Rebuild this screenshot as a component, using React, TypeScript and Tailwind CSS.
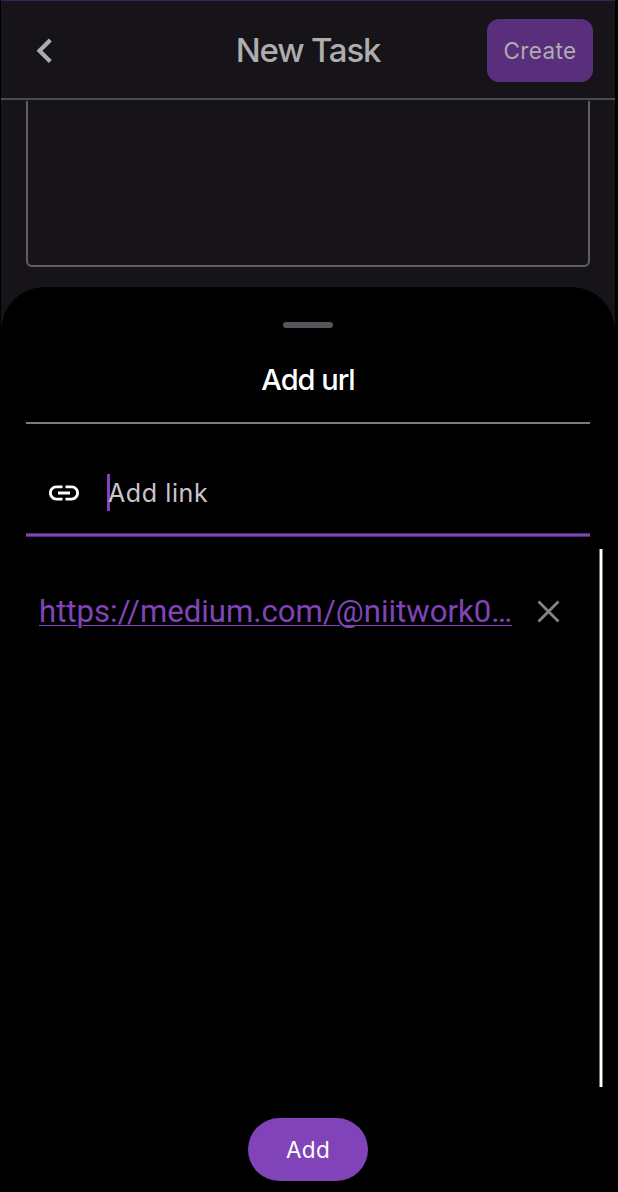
function Header() {
  return (
    <header className="grid h-[100px] shrink-0 grid-cols-[1fr_auto_1fr] items-center border-t border-b-2 border-t-[#3b205b] border-b-[#4b4b4c] px-[22px] pt-[2px]">
      <button aria-label="Back" className="flex w-8 items-center justify-end">
        <svg width="20" height="28" viewBox="0 0 20 28" fill="none" stroke="#adadad" strokeWidth="4.2">
          <path d="M15.3 2.9 4.5 13.7l10.8 10.8" />
        </svg>
      </button>
      <h1 className="font-[Inter,sans-serif] text-[33px] font-medium tracking-[-1.2px] text-[#adadad]">New Task</h1>
      <button className="h-[63px] w-[106px] justify-self-end rounded-xl bg-[#582e7d] font-[Inter,sans-serif] text-[22.5px] tracking-[0.4px] text-[#adadad]">
        Create
      </button>
    </header>
  );
}

function LinkIcon() {
  return (
    <svg width="36" height="36" viewBox="0 0 24 24" fill="#fff">
      <path d="M3.9 12c0-1.71 1.39-3.1 3.1-3.1h4V7H7c-2.76 0-5 2.24-5 5s2.24 5 5 5h4v-1.9H7c-1.71 0-3.1-1.39-3.1-3.1zM8 13h8v-2H8v2zm9-6h-4v1.9h4c1.71 0 3.1 1.39 3.1 3.1s-1.39 3.1-3.1 3.1h-4V17h4c2.76 0 5-2.24 5-5s-2.24-5-5-5z" />
    </svg>
  );
}

function AddUrlSheet() {
  return (
    <section className="flex grow flex-col rounded-t-[44px] bg-black pt-[35px]">
      <div className="h-[6px] w-[50px] shrink-0 self-center rounded-full bg-[#57545b]" />
      <div className="mx-[25px] flex h-[96px] shrink-0 items-center justify-center border-b-2 border-[#7c7c7c] pt-[10px]">
        <h2 className="font-[Inter,sans-serif] text-[29px] font-medium tracking-[-1px] text-white">Add url</h2>
      </div>
      <label className="mx-[25px] flex h-[109px] shrink-0 items-center pl-[19.5px] pt-[28px]">
        <LinkIcon />
        <span className="ml-[25.5px] mb-px h-[37px] w-[3px] bg-[#8144b8]" />
        <span className="-ml-[2px] pt-[2px] font-[Inter,sans-serif] text-[25px] tracking-[0.6px] text-[#cac4d0]">Add link</span>
      </label>
      <div className="mx-[25px] h-1 shrink-0 border-y border-[#4f2a70] bg-[#8144b8]" />
      <div className="mt-3 flex h-[538px] shrink-0 justify-between pl-[38px] pr-[12px]">
        <div className="flex h-[125px] items-center">
          <a className="w-[474px] whitespace-nowrap pt-[2px] font-[Roboto,sans-serif] text-[31.15px] text-[#8144b8] underline decoration-1 underline-offset-[3px]">
            https://medium.com/@niitwork0…
          </a>
          <svg className="ml-[23.5px]" width="24" height="24" viewBox="0 0 24 24" stroke="#858585" strokeWidth="2.8">
            <path d="m1.5 1.5 20 20M21.5 1.5l-20 20" />
          </svg>
        </div>
        <div className="h-full w-[4px] border-x border-[#777] bg-white" />
      </div>
      <button className="mt-[31px] h-[63px] w-[120px] shrink-0 self-center rounded-full bg-[#8144b8] font-[Inter,sans-serif] text-[22.5px] tracking-[0.3px] text-white">
        Add
      </button>
    </section>
  );
}

export default function App() {
  return (
    <div className="h-[1192px] w-[618px] overflow-hidden bg-black pl-px pr-[3px]">
      <main className="flex h-full flex-col bg-[#161418]">
        <Header />
        <div className="mx-[25px] mb-[20px] mt-px h-[166px] shrink-0 rounded-b-[6px] border-2 border-t-0 border-[#5f5d61]" />
        <AddUrlSheet />
      </main>
    </div>
  );
}
